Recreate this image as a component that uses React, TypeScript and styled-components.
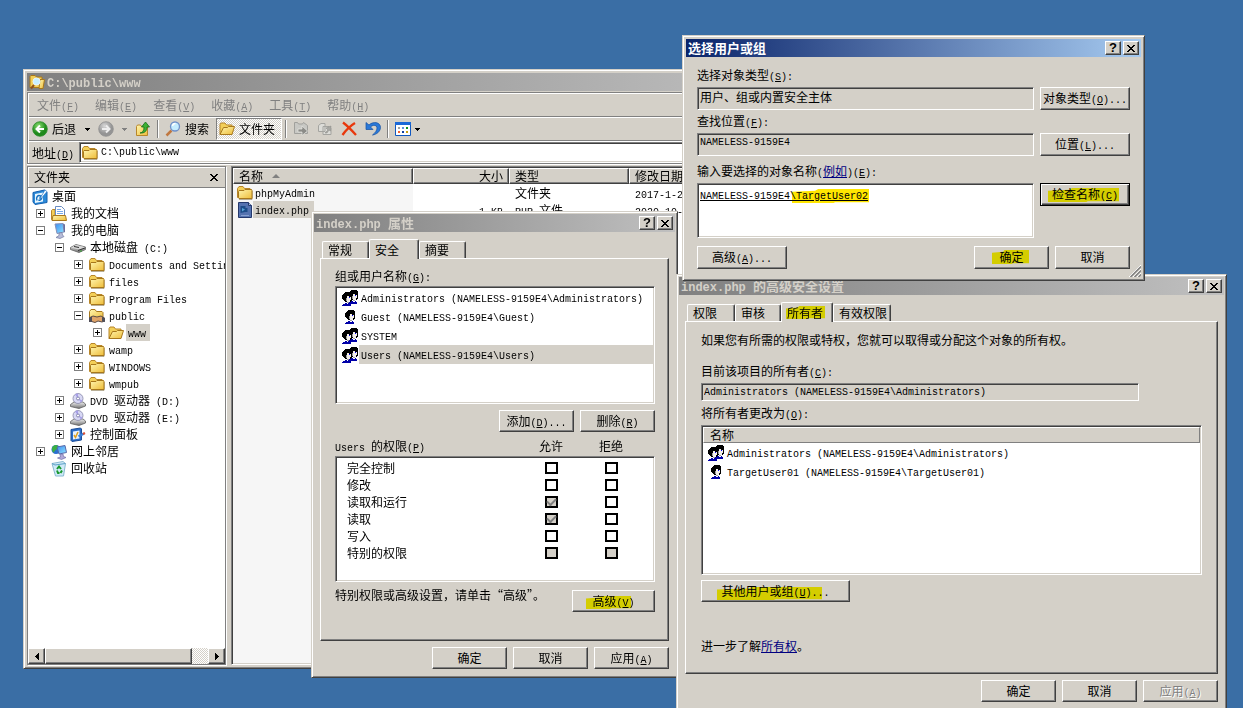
import React from "react";
import styled, { createGlobalStyle, css } from "styled-components";

const FACE = "#d4d0c8";
const CJK = '"Noto Sans CJK SC", sans-serif';
const MONO = '"Liberation Mono", "Noto Sans CJK SC", monospace';

const GlobalStyle = createGlobalStyle`
  * { box-sizing: border-box; }
  body { margin: 0; background: #3a6ea5; color: #000; font: 12px/16px ${CJK}; }
  button, input, textarea { font: inherit; color: inherit; margin: 0; border-radius: 0; outline: none; }
  p, ul, h2 { margin: 0; padding: 0; font-weight: normal; font-size: inherit; list-style: none; }
  a { color: #000080; }
  svg { display: block; flex: none; }
`;

/* ---------- bevels ---------- */

const raised = css`
  border: 1px solid;
  border-color: #fff #404040 #404040 #fff;
  box-shadow: inset -1px -1px #808080;
  background: ${FACE};
`;

const sunken = css`
  border: 1px solid;
  border-color: #808080 #fff #fff #808080;
  box-shadow: inset 1px 1px #404040, inset -1px -1px ${FACE};
`;

/* ---------- text ---------- */

const Latin = styled.span<{ $bold?: boolean }>`
  font-family: ${MONO};
  font-size: ${(p) => (p.$bold ? 12 : 10)}px;
  line-height: 10px;
  white-space: pre;
`;

/* Sets half-width runs in the monospaced face; "&" marks the access key. */
function T({ children, bold }: { children: string; bold?: boolean }) {
  return (
    <>
      {children.split(/([\x20-\x7e]+)/).map((run, i) => {
        if (!run) return null;
        if (i % 2 === 0) return run;
        const at = run.indexOf("&");
        return (
          <Latin key={i} $bold={bold}>
            {at < 0 ? run : <>{run.slice(0, at)}<u>{run[at + 1]}</u>{run.slice(at + 2)}</>}
          </Latin>
        );
      })}
    </>
  );
}

const Marker = styled.span<{ $x: number; $y: number; $w: number; $h: number; $color?: string }>`
  position: absolute;
  left: ${(p) => p.$x}px;
  top: ${(p) => p.$y}px;
  width: ${(p) => p.$w}px;
  height: ${(p) => p.$h}px;
  background: ${(p) => p.$color ?? "#fffc00"};
  clip-path: polygon(0 20%, 30% 12%, 34% 0, 100% 0, 100% 94%, 56% 94%, 54% 100%, 0 100%);
  mix-blend-mode: multiply;
  pointer-events: none;
`;

/* ---------- windows ---------- */

const Desktop = styled.main`
  position: relative;
  height: 100vh;
  overflow: hidden;
  background: #3a6ea5;
`;

const Window = styled.section<{ $x: number; $y: number; $w: number; $h: number; $pad: number }>`
  position: absolute;
  left: ${(p) => p.$x}px;
  top: ${(p) => p.$y}px;
  width: ${(p) => p.$w}px;
  min-height: ${(p) => p.$h}px;
  padding: ${(p) => p.$pad}px;
  display: flex;
  flex-direction: column;
  background: ${FACE};
  border: 1px solid;
  border-color: ${FACE} #404040 #404040 ${FACE};
  box-shadow: inset 1px 1px #fff, inset -1px -1px #808080;
`;

const TitleBar = styled.header<{ $active?: boolean }>`
  display: flex;
  align-items: center;
  gap: 2px;
  height: 18px;
  padding: 0 2px;
  color: ${(p) => (p.$active ? "#fff" : FACE)};
  background: linear-gradient(90deg, ${(p) => (p.$active ? "#0a246a, #a6caf0" : "#808080, #c0c0c0")});
`;

const TitleText = styled.h2`
  flex: 1;
  && { font-weight: bold; font-size: 13px; }
  white-space: nowrap;
`;

const CaptionButton = styled.button`
  ${raised}
  width: 16px;
  height: 14px;
  padding: 0;
  display: grid;
  place-items: center;
  && { color: #000; font: bold 13px/12px "Liberation Sans", sans-serif; }
`;

function Caption({ title, active }: { title: string; active?: boolean }) {
  return (
    <TitleBar $active={active}>
      <TitleText><T bold>{title}</T></TitleText>
      <CaptionButton aria-label="帮助">?</CaptionButton>
      <CaptionButton aria-label="关闭"><CrossIcon /></CaptionButton>
    </TitleBar>
  );
}

const PushButton = styled.button<{ $w?: number; $h?: number; $default?: boolean }>`
  ${raised}
  position: relative;
  flex: none;
  width: ${(p) => p.$w ?? 75}px;
  height: ${(p) => p.$h ?? 22}px;
  padding: 0 0 1px;
  white-space: nowrap;
  ${(p) => p.$default && css`
    border-color: #000;
    box-shadow: inset 1px 1px #fff, inset -1px -1px #404040, inset -2px -2px #808080;
  `}
  &:disabled { color: #808080; text-shadow: 1px 1px #fff; }
`;

const ButtonRow = styled.div<{ $top: number }>`
  display: flex;
  justify-content: flex-end;
  gap: 6px;
  margin-top: ${(p) => p.$top}px;
`;

const TabStrip = styled.div`
  display: flex;
  align-items: flex-end;
  height: 26px;
  padding-left: 2px;
`;

const Tab = styled.button<{ $w: number; $on?: boolean }>`
  position: relative;
  width: ${(p) => p.$w}px;
  height: ${(p) => (p.$on ? 20 : 17)}px;
  margin-bottom: ${(p) => (p.$on ? -1 : 0)}px;
  padding: 0 0 0 5px;
  text-align: left;
  white-space: nowrap;
  background: ${FACE};
  border: 1px solid;
  border-color: #fff #404040 transparent #fff;
  border-bottom: 0;
  border-radius: 2px 2px 0 0;
  box-shadow: inset -1px 0 #808080;
  z-index: ${(p) => (p.$on ? 1 : 0)};
`;

const DialogBody = styled.div`
  flex: 1;
  display: flex;
  flex-direction: column;
  padding: 0 6px 6px;
`;

const TabPanel = styled.div<{ $h: number; $left: number; $right: number }>`
  ${raised}
  min-height: ${(p) => p.$h}px;
  padding: 0 ${(p) => p.$right}px 0 ${(p) => p.$left}px;
`;

const Line = styled.p<{ $top: number }>`
  height: 16px;
  && { margin-top: ${(p) => p.$top}px; }
  white-space: nowrap;
`;

const Label = styled.label<{ $top: number }>`
  display: block;
  height: 16px;
  margin-top: ${(p) => p.$top}px;
  white-space: nowrap;
`;

const ListBox = styled.ul<{ $top: number; $h: number }>`
  ${sunken}
  && { padding: 1px; margin-top: ${(p) => p.$top}px; }
  min-height: ${(p) => p.$h}px;
  background: #fff;
`;

const ListItem = styled.li<{ $on?: boolean }>`
  display: flex;
  align-items: center;
  height: 19px;
  padding-left: 5px;
  > span { flex: 1; height: 19px; line-height: 18px; padding-left: 2px; background: ${(p) => (p.$on ? FACE : "transparent")}; }
`;

const TextField = styled.input<{ $h: number; $latin?: boolean; $top?: number }>`
  ${sunken}
  display: block;
  flex: 1;
  width: 100%;
  min-width: 0;
  height: ${(p) => p.$h}px;
  && {
    margin-top: ${(p) => p.$top ?? 0}px;
    font-family: ${(p) => (p.$latin ? MONO : CJK)};
    font-size: ${(p) => (p.$latin ? 10 : 12)}px;
  }
  padding: 0 2px ${(p) => (p.$h > 20 ? 4 : 0)}px;
  background: ${FACE};
`;

/* ---------- icons ---------- */

const CrossIcon = () => (
  <svg width="8" height="7" viewBox="0 0 8 7" shapeRendering="crispEdges" aria-hidden="true">
    <path d="M0 0h2v1h1v1h2V1h1V0h2v1H7v1H6v1H5v1h1v1h1v1h1v1H6V6H5V5H3v1H2v1H0V6h1V5h1V4h1V3H2V2H1V1H0z" />
  </svg>
);

const Svg = ({ children, w = 16, h = 16 }: { children: React.ReactNode; w?: number; h?: number }) => (
  <svg width={w} height={h} viewBox={`0 0 ${w} ${h}`} aria-hidden="true">{children}</svg>
);

const Defs = styled.svg`
  position: absolute;
`;

const Gradients = () => (
  <Defs width="0" height="0" aria-hidden="true">
    <defs>
      <linearGradient id="gold" x1="0" y1="0" x2="1" y2="1"><stop offset="0" stopColor="#fff6b0" /><stop offset="1" stopColor="#eebc38" /></linearGradient>
      <radialGradient id="green" cx=".4" cy=".3"><stop offset="0" stopColor="#8be070" /><stop offset="1" stopColor="#1f8a1c" /></radialGradient>
      <radialGradient id="grey" cx=".4" cy=".3"><stop offset="0" stopColor="#d8d8d8" /><stop offset="1" stopColor="#949494" /></radialGradient>
      <linearGradient id="screen" x1="0" y1="0" x2="1" y2="1"><stop offset="0" stopColor="#3a8cf0" /><stop offset="1" stopColor="#90e4ff" /></linearGradient>
      <linearGradient id="metal" x1="0" y1="0" x2="0" y2="1"><stop offset="0" stopColor="#f0f0f0" /><stop offset="1" stopColor="#707070" /></linearGradient>
    </defs>
  </Defs>
);

const FolderIcon = () => (
  <Svg>
    <path d="M2 14.5h13l.8-1V6" fill="none" stroke="#8a7a50" strokeOpacity=".6" />
    <path d="M.5 12.5V3.5l1.5-2h4l1.5 2h5.5l1 1v8z" fill="#f3cf58" stroke="#b8862a" />
    <path d="M1.5 6.5 2 5.5h5l1-1h6.5l.5 1v8H2l-.5-1z" fill="url(#gold)" stroke="#a8781c" />
  </Svg>
);

const OpenFolderIcon = () => (
  <Svg>
    <path d="M1 13.5V3.5l1-1.5h4l1.5 2H13v4" fill="#f3cf58" stroke="#b8862a" />
    <path d="M1 13.5 4.5 6.5h4l1-1h6l-2.5 8z" fill="url(#gold)" stroke="#a8781c" />
  </Svg>
);

const SharedFolderIcon = () => (
  <Svg>
    <path d="M.5 11.5v-8l1.5-2h4l1.5 2h5.5l1 1v7z" fill="url(#gold)" stroke="#a8781c" />
    <path d="M1 9.5 4 8l4 1 4-1 3.5 2v3L13 14l-4-1-3 1.5L1 13z" fill="#e0a468" stroke="#5a4a44" />
    <path d="M0 9.5 3 8.5v5.5H0zM13 9l3 1v4l-3-.5z" fill="#504e58" />
  </Svg>
);

const SearchFolderIcon = () => (
  <Svg>
    <path d="M1 13.5V2.5l1-1h4l1.5 1.5H13v10.5z" fill="#f3cf58" stroke="#a8781c" />
    <path d="M11 5.5h4.5L14 14.5h-4z" fill="url(#gold)" stroke="#a8781c" />
    <path d="M5 11 2 14.5" stroke="#90521c" strokeWidth="2" />
    <circle cx="7.5" cy="7.5" r="3.5" fill="#c8f0ff" stroke="#e8f4ff" />
  </Svg>
);

const DesktopIcon = () => (
  <Svg>
    <path d="M1 3.5 12.5 1l2.5 2v10.5L3 15.5 1 13z" fill="#2c8ad8" stroke="#1460b0" />
    <path d="M3 5 11 3.500v9L3 14z" fill="#eaf7ff" />
    <path d="M5 11.500c-1.500-3 1-6 3.500-4.500s.5 5-2 4M7.500 9.500 14 3" fill="none" stroke="#1470c0" strokeWidth="1.5" />
    <path d="m13 1 2 1.5L9.500 9l-1.500.5z" fill="#fff" stroke="#2878c8" strokeWidth=".6" />
  </Svg>
);

const DocumentsIcon = () => (
  <Svg>
    <path d="M.5 13.5v-9l1-1H4v10z" fill="#f3cf58" stroke="#b8862a" />
    <path d="M4.5.5h6l3 3v9h-9z" fill="#fff" stroke="#6a8cc0" />
    <path d="M6 3.5h4M6 5.5h6M6 7.5h6" stroke="#78a8e8" />
    <path d="M1 14.5 2 9.5h12.5l1 5z" fill="url(#gold)" stroke="#a8781c" />
  </Svg>
);

const ComputerIcon = () => (
  <Svg>
    <path d="m4 1 8-.5 1 8.500-7 1.500z" fill="url(#screen)" stroke="#8890b8" />
    <path d="m12 .5 2 1v8L13 9z" fill="#6a70a0" />
    <path d="m8 10 3-.5.5 2.5 1.5 1.5-4 2-4-1 3-2z" fill="#b8bcd8" stroke="#7078a0" strokeWidth=".7" />
  </Svg>
);

const DiskIcon = () => (
  <Svg>
    <path d="M.5 7.500 6 4.500l9.500 2.500v2.500L9 12.500.5 9.500z" fill="url(#metal)" stroke="#606060" strokeWidth=".8" />
    <path d="M1 7.500 6 5l9 2.200L9 9.500z" fill="#d8d8d8" />
    <path d="m8 10.500 7-2.500M4 6.500l5 1" stroke="#303030" />
    <path d="M10 11h2" stroke="#2ca02c" />
  </Svg>
);

const DvdIcon = () => (
  <Svg>
    <path d="M.5 11.500 4 9h9l2.500 2v2L9 15.500.5 13.500z" fill="url(#metal)" stroke="#606060" strokeWidth=".8" />
    <circle cx="8" cy="5.500" r="5" fill="#d8d8f4" stroke="#8888a8" strokeWidth=".8" />
    <path d="M8 5.500 5 1.500a5 5 0 0 1 3-1zM8 5.500l3 4a5 5 0 0 0 1.500-2z" fill="#a8a0e8" />
    <circle cx="8" cy="5.500" r="1.500" fill="#fff" stroke="#7070a0" strokeWidth=".8" />
  </Svg>
);

const ControlIcon = () => (
  <Svg>
    <path d="M1 2.500 10.500 1l1 1v11L2 14.500l-1-1z" fill="#2a6cc8" stroke="#1a4c98" />
    <path d="M3 4.500 9.500 3.500v8L3 12.500z" fill="#e8f2ff" />
    <path d="m4 8 1.500 2.500L8 5" fill="none" stroke="#e0a020" strokeWidth="1.5" />
    <path d="M8.500 9.500 14 6.500" stroke="#3a80d8" strokeWidth="2.5" /><path d="m13 7 2-1" stroke="#e05030" strokeWidth="2" />
  </Svg>
);

const NetworkIcon = () => (
  <Svg>
    <circle cx="5" cy="5.5" r="4.5" fill="#2a70d0" />
    <path d="M1 4c1-3 5-4 6-2S4 6 3 8 1 6 1 4z" fill="#3cb040" />
    <path d="m6 3 8-1.500 1.500 7-7.500 1.500z" fill="url(#screen)" stroke="#5868a8" />
    <path d="m9 10.500 3-.5.500 2.500 2.500 1-4.500 2-4-1.500 3-1z" fill="#b0a8d8" stroke="#7070a8" strokeWidth=".7" />
  </Svg>
);

const RecycleIcon = () => (
  <Svg>
    <path d="M1 2.500 12 .5l2.500 2L12.500 15h-8z" fill="#cfeaf8" stroke="#88b8d0" />
    <path d="M1 2.500 4 4l10.500-1.500" fill="none" stroke="#5ca0c8" />
    <path d="m6 8 2-2.500L10 8M6 9.500 7 12h1.500M9.500 12 11 9.500" fill="none" stroke="#18982c" strokeWidth="2" />
  </Svg>
);

const PhpFileIcon = () => (
  <Svg>
    <path d="M1.500.500h10l3 3v12h-13z" fill="#5472b0" stroke="#24386c" />
    <path d="M11.500.500v3h3" fill="#a8bce0" stroke="#24386c" />
    <path d="M3.500 4h5v2h2v4H8l-4.500 1z" fill="#1c4c88" /><path d="m5 6 3 1.500-3 2z" fill="#58a4d8" />
    <path d="M4 13.500h8" stroke="#88a0d0" />
  </Svg>
);

const BackIcon = () => (
  <Svg><circle cx="8" cy="8" r="7.3" fill="url(#green)" stroke="#2b8a28" strokeWidth=".8" /><path d="M12 8H5M8 4.500 4.500 8 8 11.500" fill="none" stroke="#fff" strokeWidth="2" /></Svg>
);
const ForwardIcon = () => (
  <Svg><circle cx="8" cy="8" r="7.3" fill="url(#grey)" stroke="#909090" strokeWidth=".8" /><path d="M4 8h7M8 4.500 11.500 8 8 11.500" fill="none" stroke="#eee" strokeWidth="2" /></Svg>
);
const UpIcon = () => (
  <Svg>
    <path d="M1.500 14.500V5.500l1-1.500h3l1 1.500h6v9z" fill="url(#gold)" stroke="#b8862a" />
    <path d="M5 12c3-.5 4-2.500 4-6H6.500L10.500 1 14.500 6h-2.500c0 4-2.500 6.500-7 6z" fill="#3cb034" stroke="#14701c" strokeWidth=".8" />
  </Svg>
);
const SearchIcon = () => (
  <Svg>
    <path d="M6.500 9.500 1.500 14.500" stroke="#c07840" strokeWidth="2.5" />
    <circle cx="10" cy="5.5" r="4.5" fill="#c4ecff" stroke="#7090c8" strokeWidth="1.3" />
    <path d="M7.500 5a3 3 0 0 1 3-2.500" fill="none" stroke="#fff" strokeWidth="1.5" />
  </Svg>
);
const MoveIcon = () => (
  <Svg>
    <path d="M1.500 12.500v-11h3l1 1.500h4l1-1.500 4 3v8z" fill="#c8c8c4" stroke="#a0a09c" />
    <path d="M5 8h4V5l5.500 5L9 14.500V11H5z" fill="#8c8c88" stroke="#e8e8e4" strokeWidth=".7" />
  </Svg>
);
const CopyIcon = () => (
  <Svg>
    <path d="M1.500 10.500v-6L4 2.500h4v8zM6 13.500v-8h6l2 2v6z" fill="#dcdcd8" stroke="#a4a4a0" />
    <path d="m8 12 3-3-2-2 5-2-.5 5-1.500-1-2 3z" fill="#a8a8a4" stroke="#888884" strokeWidth=".5" />
  </Svg>
);
const DeleteIcon = () => (
  <Svg><path d="M2 1.500c4 3 8 7 13 12.500M14 2C9 5 5 9 1.500 14" fill="none" stroke="#e8380c" strokeWidth="2.3" /></Svg>
);
const UndoIcon = () => (
  <Svg><path d="M1 1.500v7h7L5.500 6C8 3.500 12 4 12 7c0 2.500-2 5-4.500 7C12 13.500 15.500 10 15.500 6.500 15.500 1 8 0 4 4z" fill="#2a78d8" stroke="#1450a0" strokeWidth=".7" /></Svg>
);
const ViewsIcon = () => (
  <Svg>
    <path d="M.5 1.500h15v13H.5z" fill="#fff" stroke="#1058c0" /><path d="M0 1h16v3H0z" fill="#1a68d8" />
    <g shapeRendering="crispEdges"><path d="M3 6h2v2H3z" fill="#a0a0a0" /><path d="M7 6h2v2H7z" fill="#6090e0" /><path d="M11 6h2v2h-2z" fill="#109020" /><path d="M3 10h2v2H3z" fill="#f06030" /><path d="M7 10h2v2H7z" fill="#1040a0" /><path d="M11 10h2v2h-2z" fill="#c8a010" /></g>
  </Svg>
);

const Caret = ({ grey }: { grey?: boolean }) => (
  <svg width="5" height="3" viewBox="0 0 5 3" shapeRendering="crispEdges" aria-hidden="true"><path d="M0 0h5v1H4v1H3v1H2V2H1V1H0z" fill={grey ? "#808080" : "#000"} /></svg>
);

const Head = ({ dx = 0, dy = 0 }: { dx?: number; dy?: number }) => (
  <g transform={`translate(${dx} ${dy})`}>
    <path d="M2 2h1V1h1V0h6v1h1v8H9V4H5v5H3V8H2V7H1V3h1z" fill="#000" />
    <path d="M6 4h3v1h1v3H9v2H6V8H5V6h1z" fill="#f4f0ec" />
    <path d="M5 4h1v2H5zM8 4h1v1H8zM4 9h2v1H4zM9 8h1v2H9zM10 5h1v2h-1z" fill="#000" />
    <path d="M5 6h1v3H5zM6 10h2v1H6z" fill="#a0a0a0" />
    <path d="M8 5h1v1H8z" fill="#00f" />
    <path d="M2 12h2v-1h2v1h2v-1h1v1h1v2H1v-1h1z" fill="#0000a8" />
  </g>
);
const UserIcon = () => (
  <svg width="17" height="16" viewBox="0 0 17 16" shapeRendering="crispEdges" aria-hidden="true"><Head dx={2} dy={1} /></svg>
);
const GroupIcon = () => (
  <svg width="17" height="16" viewBox="0 0 17 16" shapeRendering="crispEdges" aria-hidden="true"><Head dx={5} dy={0} /><Head dx={-1} dy={2} /></svg>
);

/* ---------- explorer ---------- */

const Rebar = styled.div`
  margin-top: 1px;
  padding: 1px 1px 0;
  border: 1px solid #808080;
  border-right: 0;
  box-shadow: inset 1px 1px #fff, 0 1px #fff;
`;

const Band = styled.div<{ $h: number; $last?: boolean }>`
  display: flex;
  align-items: center;
  height: ${(p) => p.$h}px;
  white-space: nowrap;
  ${(p) => !p.$last && css`
    box-shadow: 0 1px #808080, 0 2px #fff;
    margin-bottom: 2px;
  `}
`;

const MenuItem = styled.button`
  padding: 0 8px;
  border: 0;
  background: none;
  && { color: #808080; }
`;

const ToolButton = styled.button<{ $left?: number; $pressed?: boolean }>`
  display: flex;
  align-items: center;
  gap: 4px;
  height: 22px;
  padding: 0 3px;
  && { margin-left: ${(p) => p.$left ?? 0}px; }
  border: 0;
  background: none;
  ${(p) => p.$pressed && css`
    padding: 0 6px 0 2px;
    border: 1px solid;
    border-color: #808080 #fff #fff #808080;
    background: repeating-conic-gradient(#fff 0 25%, ${FACE} 0 50%) 0 0 / 2px 2px;
  `}
`;

const Divider = styled.span`
  width: 2px;
  height: 18px;
  margin: 0 3px;
  background: linear-gradient(90deg, #808080 50%, #fff 50%);
`;

const AddressLabel = styled.label`
  padding: 0 5px 0 3px;
`;

const AddressBox = styled.div`
  ${sunken}
  display: flex;
  align-items: center;
  gap: 3px;
  flex: 1;
  height: 21px;
  padding: 0 2px;
  background: #fff;
`;

const AddressInput = styled.input`
  flex: 1;
  border: 0;
  padding: 0;
  background: none;
  && { font-family: ${MONO}; font-size: 10px; }
`;

const Panes = styled.div`
  display: flex;
  flex: 1;
  margin-top: 2px;
`;

const Sidebar = styled.aside`
  display: flex;
  flex-direction: column;
  width: 199px;
  margin-right: 5px;
  border: 1px solid #808080;
  box-shadow: 1px 1px #fff;
  background: #fff;
`;

const SidebarHead = styled.div`
  display: flex;
  align-items: center;
  justify-content: space-between;
  height: 21px;
  padding: 0 3px 0 6px;
  background: ${FACE};
  border-bottom: 1px solid #808080;
  box-shadow: inset 1px 1px #fff;
`;

const FlatButton = styled.button`
  padding: 0 4px;
  border: 0;
  background: none;
`;

const Tree = styled.ul`
  flex: 1;
  overflow: hidden;
`;

const TreeRow = styled.li<{ $level: number }>`
  display: flex;
  align-items: center;
  height: 17px;
  padding-left: ${(p) => p.$level * 19 + 4}px;
  white-space: nowrap;
`;

const TreeLabel = styled.span<{ $on?: boolean }>`
  height: 17px;
  margin-left: 2px;
  padding: 0 4px 0 2px;
  line-height: 16px;
  background: ${(p) => (p.$on ? FACE : "transparent")};
`;

const Expander = styled.button`
  display: grid;
  place-items: center;
  flex: none;
  width: 9px;
  height: 9px;
  && { margin: 0 6px 0 -15px; }
  padding: 0;
  border: 1px solid #808080;
  background: #fff;
`;

const ScrollBar = styled.div`
  display: flex;
  height: 16px;
  background: repeating-conic-gradient(#fff 0 25%, ${FACE} 0 50%) 0 0 / 2px 2px;
`;

const ScrollButton = styled.button`
  ${raised}
  display: grid;
  place-items: center;
  width: 17px;
  padding: 0;
`;

const ScrollThumb = styled.div`
  ${raised}
  width: 147px;
  margin-right: auto;
`;

const FilePane = styled.div`
  ${sunken}
  flex: 1;
  padding: 1px;
  background: linear-gradient(90deg, #f6f6f6 181px, #fff 181px);
`;

const FileTable = styled.table`
  width: 100%;
  table-layout: fixed;
  border-spacing: 0;
  white-space: nowrap;
  th {
    height: 16px;
    padding: 0 5px;
    font-weight: normal;
    text-align: left;
    line-height: 14px;
    background: ${FACE};
    border: 1px solid;
    border-color: #fff #404040 #404040 #fff;
    box-shadow: inset -1px -1px #808080;
  }
  td { height: 17px; padding: 0 6px; line-height: 16px; }
  td:first-child { padding: 0 4px; }
  th:nth-child(2), td:nth-child(2) { text-align: right; }
`;

const ThInner = styled.span`
  display: flex;
  align-items: center;
  gap: 9px;
`;

const FileName = styled.span<{ $on?: boolean }>`
  display: flex;
  align-items: center;
  height: 17px;
  > span { height: 17px; padding: 0 5px 0 2px; background: ${(p) => (p.$on ? FACE : "transparent")}; }
`;

type Node = { level: number; icon: React.ReactNode; name: string; sign?: "+" | "-"; on?: boolean };

const TREE: Node[] = [
  { level: 0, icon: <DesktopIcon />, name: "桌面" },
  { level: 1, icon: <DocumentsIcon />, name: "我的文档", sign: "+" },
  { level: 1, icon: <ComputerIcon />, name: "我的电脑", sign: "-" },
  { level: 2, icon: <DiskIcon />, name: "本地磁盘 (C:)", sign: "-" },
  { level: 3, icon: <FolderIcon />, name: "Documents and Settings", sign: "+" },
  { level: 3, icon: <FolderIcon />, name: "files", sign: "+" },
  { level: 3, icon: <FolderIcon />, name: "Program Files", sign: "+" },
  { level: 3, icon: <SharedFolderIcon />, name: "public", sign: "-" },
  { level: 4, icon: <OpenFolderIcon />, name: "www", sign: "+", on: true },
  { level: 3, icon: <FolderIcon />, name: "wamp", sign: "+" },
  { level: 3, icon: <FolderIcon />, name: "WINDOWS", sign: "+" },
  { level: 3, icon: <FolderIcon />, name: "wmpub", sign: "+" },
  { level: 2, icon: <DvdIcon />, name: "DVD 驱动器 (D:)", sign: "+" },
  { level: 2, icon: <DvdIcon />, name: "DVD 驱动器 (E:)", sign: "+" },
  { level: 2, icon: <ControlIcon />, name: "控制面板", sign: "+" },
  { level: 1, icon: <NetworkIcon />, name: "网上邻居", sign: "+" },
  { level: 1, icon: <RecycleIcon />, name: "回收站" },
];

const MENUS = ["文件(&F)", "编辑(&E)", "查看(&V)", "收藏(&A)", "工具(&T)", "帮助(&H)"];

function Explorer() {
  return (
    <Window $x={23} $y={69} $w={768} $h={600} $pad={3}>
      <TitleBar>
        <SearchFolderIcon />
        <TitleText><T bold>C:\public\www</T></TitleText>
      </TitleBar>
      <Rebar>
        <Band as="nav" $h={22}>
          {MENUS.map((m) => <MenuItem key={m}><T>{m}</T></MenuItem>)}
        </Band>
        <Band $h={22}>
          <ToolButton><BackIcon />后退</ToolButton>
          <ToolButton $left={3} aria-label="后退列表"><Caret /></ToolButton>
          <ToolButton $left={2} aria-label="前进"><ForwardIcon /></ToolButton>
          <ToolButton $left={2} aria-label="前进列表"><Caret grey /></ToolButton>
          <ToolButton $left={2} aria-label="向上"><UpIcon /></ToolButton>
          <Divider />
          <ToolButton><SearchIcon />搜索</ToolButton>
          <ToolButton $pressed $left={4}><OpenFolderIcon />文件夹</ToolButton>
          <Divider />
          <ToolButton aria-label="移至"><MoveIcon /></ToolButton>
          <ToolButton $left={2} aria-label="复制到"><CopyIcon /></ToolButton>
          <ToolButton $left={2} aria-label="删除"><DeleteIcon /></ToolButton>
          <ToolButton $left={2} aria-label="撤消"><UndoIcon /></ToolButton>
          <Divider />
          <ToolButton aria-label="查看"><ViewsIcon /><Caret /></ToolButton>
        </Band>
        <Band $h={21} $last>
          <AddressLabel htmlFor="address"><T>地址(&D)</T></AddressLabel>
          <AddressBox>
            <FolderIcon />
            <AddressInput id="address" defaultValue="C:\public\www" />
          </AddressBox>
        </Band>
      </Rebar>
      <Panes>
        <Sidebar>
          <SidebarHead>
            文件夹
            <FlatButton aria-label="关闭"><CrossIcon /></FlatButton>
          </SidebarHead>
          <Tree>
            {TREE.map((n) => (
              <TreeRow key={n.name} $level={n.level}>
                {n.sign && (
                  <Expander aria-label={n.sign === "+" ? "展开" : "折叠"}>
                    <svg width="7" height="7" viewBox="0 0 7 7" shapeRendering="crispEdges"><path d={n.sign === "+" ? "M1 3h5v1H1zM3 1h1v5H3z" : "M1 3h5v1H1z"} /></svg>
                  </Expander>
                )}
                {n.icon}
                <TreeLabel $on={n.on}><T>{n.name}</T></TreeLabel>
              </TreeRow>
            ))}
          </Tree>
          <ScrollBar>
            <ScrollButton aria-label="向左"><svg width="4" height="7" viewBox="0 0 4 7" shapeRendering="crispEdges"><path d="M3 0h1v7H3V6H2V5H1V4H0V3h1V2h1V1h1z" /></svg></ScrollButton>
            <ScrollThumb />
            <ScrollButton aria-label="向右"><svg width="4" height="7" viewBox="0 0 4 7" shapeRendering="crispEdges"><path d="M0 0h1v1h1v1h1v1h1v1H3v1H2v1H1v1H0z" /></svg></ScrollButton>
          </ScrollBar>
        </Sidebar>
        <FilePane>
          <FileTable>
            <colgroup><col width="180" /><col width="96" /><col width="120" /><col /></colgroup>
            <thead>
              <tr>
                <th><ThInner>名称<svg width="8" height="4" viewBox="0 0 8 4"><path d="M4 0 8 4H0z" fill="#808080" /></svg></ThInner></th>
                <th>大小</th><th>类型</th><th>修改日期</th>
              </tr>
            </thead>
            <tbody>
              <tr>
                <td><FileName><FolderIcon /><span><T>phpMyAdmin</T></span></FileName></td>
                <td /><td>文件夹</td><td><T>2017-1-22 10:12</T></td>
              </tr>
              <tr>
                <td><FileName $on><PhpFileIcon /><span><T>index.php</T></span></FileName></td>
                <td><T>1 KB</T></td><td><T>PHP 文件</T></td><td><T>2020-10-12 9:30</T></td>
              </tr>
            </tbody>
          </FileTable>
        </FilePane>
      </Panes>
    </Window>
  );
}

/* ---------- file properties ---------- */

const PermGrid = styled.div<{ $end: number }>`
  display: grid;
  grid-template-columns: 1fr 60px 60px ${(p) => p.$end}px;
  align-items: center;
  justify-items: center;
  > :first-child { justify-self: start; }
`;

const PermHead = styled(PermGrid)`
  margin-top: 6px;
  height: 16px;
`;

const PermRow = styled(PermGrid).attrs({ as: "li" })`
  height: 17px;
  padding-left: 10px;
  &:first-child { margin-top: 1px; }
`;

const Check = styled.input.attrs({ type: "checkbox" })`
  appearance: none;
  display: grid;
  place-items: center;
  width: 13px;
  height: 12px;
  border: 2px solid #000;
  background: #fff;
  &:disabled { background: ${FACE}; }
  &:checked::after {
    content: "";
    width: 7px;
    height: 4px;
    margin-bottom: 2px;
    border: solid #808080;
    border-width: 0 0 2px 2px;
    transform: rotate(-45deg);
  }
`;

const NoteRow = styled.div`
  display: flex;
  justify-content: space-between;
  align-items: flex-start;
  margin-top: 5px;
  white-space: nowrap;
`;

const NoteButton = styled(PushButton)`
  && { margin-top: 3px; }
`;

const PERMS: [string, boolean, boolean, boolean][] = [
  ["完全控制", false, false, false],
  ["修改", false, false, false],
  ["读取和运行", true, true, false],
  ["读取", true, true, false],
  ["写入", false, false, false],
  ["特别的权限", false, true, true],
];

function Properties() {
  return (
    <Window $x={311} $y={211} $w={367} $h={466} $pad={2}>
      <Caption title="index.php 属性" />
      <DialogBody>
        <TabStrip role="tablist">
          <Tab role="tab" $w={47}>常规</Tab>
          <Tab role="tab" $w={50} $on>安全</Tab>
          <Tab role="tab" $w={47}>摘要</Tab>
        </TabStrip>
        <TabPanel $h={383} $left={14} $right={13}>
          <Line $top={9}><T>组或用户名称(&G):</T></Line>
          <ListBox $top={2} $h={118}>
            <ListItem><GroupIcon /><span><T>Administrators (NAMELESS-9159E4\Administrators)</T></span></ListItem>
            <ListItem><UserIcon /><span><T>Guest (NAMELESS-9159E4\Guest)</T></span></ListItem>
            <ListItem><GroupIcon /><span><T>SYSTEM</T></span></ListItem>
            <ListItem $on><GroupIcon /><span><T>Users (NAMELESS-9159E4\Users)</T></span></ListItem>
          </ListBox>
          <ButtonRow $top={6}>
            <PushButton><T>添加(&D)...</T></PushButton>
            <PushButton><T>删除(&R)</T></PushButton>
          </ButtonRow>
          <PermHead $end={14}><span><T>Users 的权限(&P)</T></span><span>允许</span><span>拒绝</span></PermHead>
          <ListBox $top={2} $h={126}>
            {PERMS.map(([name, checked, noAllow, noDeny]) => (
              <PermRow key={name} $end={12}>
                <span>{name}</span>
                <Check aria-label={`${name} 允许`} defaultChecked={checked} disabled={noAllow} />
                <Check aria-label={`${name} 拒绝`} disabled={noDeny} />
              </PermRow>
            ))}
          </ListBox>
          <NoteRow>
            <span>特别权限或高级设置，请单击“高级”。</span>
            <NoteButton $w={83}><T>高级(&V)</T><Marker $x={13} $y={5} $w={45} $h={13} /></NoteButton>
          </NoteRow>
        </TabPanel>
        <ButtonRow $top={6}>
          <PushButton>确定</PushButton>
          <PushButton>取消</PushButton>
          <PushButton><T>应用(&A)</T></PushButton>
        </ButtonRow>
      </DialogBody>
    </Window>
  );
}

/* ---------- advanced security ---------- */

const ColumnHead = styled.li`
  height: 16px;
  padding-left: 6px;
  line-height: 14px;
  background: ${FACE};
  border: 1px solid;
  border-color: #fff #808080 #808080 #fff;
`;

const OwnerField = styled.div`
  width: 438px;
`;

const OtherButton = styled(PushButton)`
  && { margin-top: 5px; }
`;

function Advanced() {
  return (
    <Window $x={676} $y={274} $w={551} $h={437} $pad={2}>
      <Caption title="index.php 的高级安全设置" />
      <DialogBody>
        <TabStrip role="tablist">
          <Tab role="tab" $w={48}>权限</Tab>
          <Tab role="tab" $w={46}>审核</Tab>
          <Tab role="tab" $w={52} $on>所有者<Marker $x={4} $y={3} $w={39} $h={13} /></Tab>
          <Tab role="tab" $w={58}>有效权限</Tab>
        </TabStrip>
        <TabPanel $h={353} $left={15} $right={15}>
          <Line $top={10}>如果您有所需的权限或特权，您就可以取得或分配这个对象的所有权。</Line>
          <OwnerField>
            <Label $top={15} htmlFor="owner"><T>目前该项目的所有者(&C):</T></Label>
            <TextField id="owner" $h={18} $top={4} $latin readOnly defaultValue="Administrators (NAMELESS-9159E4\Administrators)" />
          </OwnerField>
          <Line $top={4}><T>将所有者更改为(&O):</T></Line>
          <ListBox $top={4} $h={150}>
            <ColumnHead>名称</ColumnHead>
            <ListItem><GroupIcon /><span><T>Administrators (NAMELESS-9159E4\Administrators)</T></span></ListItem>
            <ListItem><UserIcon /><span><T>TargetUser01 (NAMELESS-9159E4\TargetUser01)</T></span></ListItem>
          </ListBox>
          <OtherButton $w={149}><T>其他用户或组(&U)...</T><Marker $x={15} $y={6} $w={105} $h={13} /></OtherButton>
          <Line $top={36}>进一步了解<a href="#owner">所有权</a>。</Line>
        </TabPanel>
        <ButtonRow $top={6}>
          <PushButton>确定</PushButton>
          <PushButton>取消</PushButton>
          <PushButton disabled><T>应用(&A)</T></PushButton>
        </ButtonRow>
      </DialogBody>
    </Window>
  );
}

/* ---------- select user or group ---------- */

const SelectBody = styled.div`
  padding: 6px 11px 0;
`;

const FieldRow = styled.div`
  display: flex;
  align-items: flex-start;
  gap: 6px;
  margin-top: 4px;
`;

const NameBox = styled.div`
  position: relative;
  flex: 1;
`;

const NameArea = styled.textarea`
  ${sunken}
  display: block;
  width: 100%;
  height: 55px;
  padding: 5px 2px;
  resize: none;
  overflow: hidden;
  background: #fff;
  && { font: 10px/16px ${MONO}; }
  text-decoration: underline;
`;

const Footer = styled.div`
  display: flex;
  gap: 6px;
  margin-top: 8px;
  && > :first-child { margin-right: auto; }
`;

const Grip = styled.svg`
  position: absolute;
  right: 3px;
  bottom: 3px;
`;

function SelectUser() {
  return (
    <Window $x={682} $y={35} $w={463} $h={246} $pad={3}>
      <Caption active title="选择用户或组" />
      <SelectBody>
        <Label $top={4} htmlFor="otype"><T>选择对象类型(&S):</T></Label>
        <FieldRow>
          <TextField id="otype" $h={23} readOnly defaultValue="用户、组或内置安全主体" />
          <PushButton $w={90} $h={23}><T>对象类型(&O)...</T></PushButton>
        </FieldRow>
        <Label $top={3} htmlFor="place"><T>查找位置(&F):</T></Label>
        <FieldRow>
          <TextField id="place" $h={23} $latin readOnly defaultValue="NAMELESS-9159E4" />
          <PushButton $w={90} $h={23}><T>位置(&L)...</T></PushButton>
        </FieldRow>
        <Label $top={7} htmlFor="names"><T>输入要选择的对象名称(</T><a href="#names">例如</a><T>)(&E):</T></Label>
        <FieldRow>
          <NameBox>
            <NameArea id="names" spellCheck={false} defaultValue="NAMELESS-9159E4\TargetUser02" />
            <Marker $x={95} $y={6} $w={77} $h={14} $color="#ffe600" />
          </NameBox>
          <PushButton $w={90} $h={23} $default><T>检查名称(&C)</T><Marker $x={7} $y={4} $w={71} $h={14} /></PushButton>
        </FieldRow>
        <Footer>
          <PushButton $w={90} $h={23}><T>高级(&A)...</T></PushButton>
          <PushButton $h={23}>确定<Marker $x={17} $y={3} $w={37} $h={14} /></PushButton>
          <PushButton $h={23}>取消</PushButton>
        </Footer>
      </SelectBody>
      <Grip width="12" height="12" viewBox="0 0 12 12" aria-hidden="true">
        <path d="M0 12 12 0M4 12l8-8M8 12l4-4" stroke="#fff" />
        <path d="M1.500 12 12 1.500M5.500 12 12 5.500M9.500 12 12 9.500" stroke="#808080" strokeWidth="1.5" />
      </Grip>
    </Window>
  );
}

export default function App() {
  return (
    <Desktop lang="zh-CN">
      <GlobalStyle />
      <Gradients />
      <Explorer />
      <Properties />
      <Advanced />
      <SelectUser />
    </Desktop>
  );
}
